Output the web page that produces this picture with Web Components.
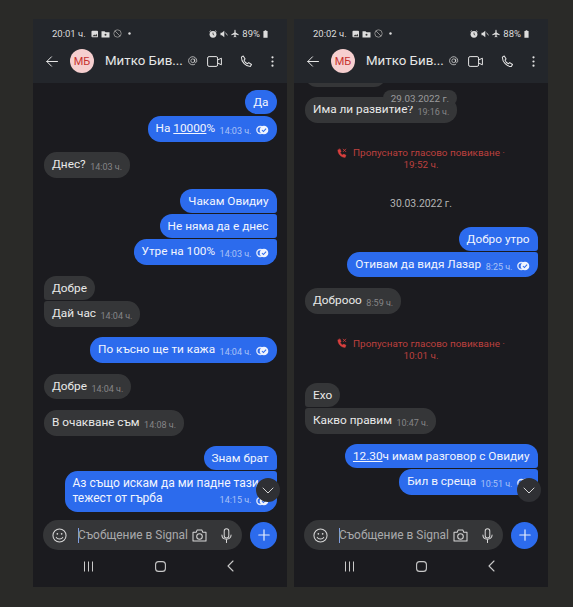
<!DOCTYPE html>
<html><head><meta charset="utf-8">
<style>
html,body{margin:0;padding:0;background:#2a2a28;}
body{width:573px;height:607px;overflow:hidden;font-family:Roboto,"Liberation Sans",sans-serif;}
.stage{display:flex;gap:7px;padding:19px 0 0 33px;}
</style></head><body>
<div class="stage">
<x-phone time="20:01 ч." batt="89%">
  <x-bubble out pos="single" top="7">Да</x-bubble>
  <x-bubble out pos="single" top="2" time="14:03 ч." tick>На <u>10000</u>%</x-bubble>
  <x-bubble top="10.500" time="14:03 ч.">Днес?</x-bubble>
  <x-bubble out pos="first" top="11">Чакам Овидиу</x-bubble>
  <x-bubble out pos="mid" top="1">Не няма да е днес</x-bubble>
  <x-bubble out pos="last" top="1.500" time="14:03 ч." tick>Утре на 100%</x-bubble>
  <x-bubble pos="first" top="11.500">Добре</x-bubble>
  <x-bubble pos="last" top="1" time="14:04 ч.">Дай час</x-bubble>
  <x-bubble out top="10.500" time="14:04 ч." tick>По късно ще ти кажа</x-bubble>
  <x-bubble top="11" time="14:04 ч.">Добре</x-bubble>
  <x-bubble top="11" time="14:08 ч.">В очакване съм</x-bubble>
  <x-bubble out pos="first" top="10.500">Знам брат</x-bubble>
  <x-wrap-bubble top="1" time="14:15 ч."><span slot="a">Аз също искам да ми падне тази</span><span slot="b">тежест от гърба</span></x-wrap-bubble>
</x-phone>
<x-phone time="20:02 ч." batt="88%">
  <x-bubble top="-20" pad="4px 39px">&nbsp;</x-bubble>
  <x-bubble top="10" time="19:16 ч.">Има ли развитие?</x-bubble>
  <x-date-pill>29.03.2022 г.</x-date-pill>
  <x-missed top="24.500" time="19:52 ч."></x-missed>
  <x-date top="26">30.03.2022 г.</x-date>
  <x-bubble out pos="first" top="15.700">Добро утро</x-bubble>
  <x-bubble out pos="last" top="1.300" time="8:25 ч." tick>Отивам да видя Лазар</x-bubble>
  <x-bubble top="11" time="8:59 ч.">Доброоо</x-bubble>
  <x-missed top="24" time="10:01 ч."></x-missed>
  <x-bubble pos="first" top="21">Ехо</x-bubble>
  <x-bubble pos="last" top="1.500" time="10:47 ч.">Какво правим</x-bubble>
  <x-bubble out pos="first" top="10.500"><u>12.30</u>ч имам разговор с Овидиу</x-bubble>
  <x-bubble out pos="last" top="1" time="10:51 ч." tick>Бил в среща</x-bubble>
</x-phone>
</div>
<script>
const BLUE='#2c6bed';
const tickSvg=`<svg viewBox="0 0 13 10" width="12.500" height="10" style="display:block"><circle cx="4.500" cy="5" r="3.600" fill="none" stroke="#dfe8fd" stroke-width="1.500"/><circle cx="8.300" cy="5" r="4.500" fill="#f0f4fe"/><path d="M6.200 5l1.500 1.600L10.500 3.600" fill="none" stroke="${BLUE}" stroke-width="1.100"/></svg>`;

class XBubble extends HTMLElement{
  connectedCallback(){
    if(this.shadowRoot)return;
    const r=this.attachShadow({mode:'open'});
    const out=this.hasAttribute('out');
    const t=this.getAttribute('time');const tick=this.hasAttribute('tick');
    const pos=this.getAttribute('pos')||'single';
    const R=12.5,S=3;
    const tIn=pos==='mid'||pos==='last'?S:R, bIn=pos==='first'||pos==='mid'?S:R;
    const rad=out?`${R}px ${tIn}px ${bIn}px ${R}px`:`${tIn}px ${R}px ${R}px ${bIn}px`;
    const pad=this.getAttribute('pad')||(t?'4px 8px 5.500px':'4px 8px');
    r.innerHTML=`<style>
    :host{display:flex;justify-content:${out?'flex-end':'flex-start'};padding:0 10.500px 0 11px;margin-top:${this.getAttribute('top')||0}px;flex:none}
    .b{background:${out?BLUE:'#353638'};color:${out?'#f2f5fe':'#e9e9e9'};font-size:11.800px;line-height:16px;padding:${pad};border-radius:${rad};box-sizing:border-box;white-space:nowrap}
    .m{font-size:9px;line-height:1;vertical-align:-2px;color:${out?'#a9c2f7':'#858587'};margin-left:4.500px}
    .tk{display:inline-block;vertical-align:-3px;line-height:0;margin-left:4.500px}
    </style><div class="b"><slot></slot>${t?`<span class="m">${t}</span>`:''}${tick?`<span class="tk">${tickSvg}</span>`:''}</div>`;
  }
}
customElements.define('x-bubble',XBubble);

class XWrapBubble extends HTMLElement{
  connectedCallback(){
    if(this.shadowRoot)return;
    const r=this.attachShadow({mode:'open'});
    r.innerHTML=`<style>
    :host{display:flex;justify-content:flex-end;padding:0 10.500px 0 0;margin-top:${this.getAttribute('top')||0}px;flex:none}
    .b{background:${BLUE};color:#f2f5fe;font-size:12px;line-height:15px;padding:5px 8px 6px;border-radius:12.500px 3px 12.500px 12.500px;width:212px;box-sizing:border-box;white-space:nowrap}
    .f{display:flex;align-items:center}
    .sp{flex:1}
    .m{font-size:9px;line-height:1;color:#a9c2f7;margin-top:4px}
    .tk{margin:5px 0 0 4.500px;flex:none}
    </style><div class="b"><div><slot name="a"></slot></div><div class="f"><slot name="b"></slot><span class="sp"></span><span class="m">${this.getAttribute('time')}</span><span class="tk">${tickSvg}</span></div></div>`;
  }
}
customElements.define('x-wrap-bubble',XWrapBubble);

class XMissed extends HTMLElement{
  connectedCallback(){
    if(this.shadowRoot)return;
    const r=this.attachShadow({mode:'open'});
    r.innerHTML=`<style>
    :host{display:block;margin-top:${this.getAttribute('top')||0}px;text-align:center;color:#bd403e;font-size:9.900px;line-height:12px;flex:none}
    svg{vertical-align:-2px;margin-right:6px}
    </style><svg viewBox="0 0 12 12" width="10" height="10.500" fill="none" stroke="#d8403e" stroke-linecap="round"><path d="M1 2.200C1 7 4.800 11 9.800 11l1-2.700L8 7 6.900 8.100C5.300 7.300 4.500 6.300 3.900 5L5 3.900 3.700 1z" fill="#d8403e" stroke-width=".5"/><path d="M7.500 1l3 3M10.500 1l-3 3" stroke-width="1"/></svg>Пропуснато гласово повикване ·<br>${this.getAttribute('time')}`;
  }
}
customElements.define('x-missed',XMissed);

class XDate extends HTMLElement{
  connectedCallback(){
    if(this.shadowRoot)return;
    const r=this.attachShadow({mode:'open'});
    r.innerHTML=`<style>:host{display:block;margin-top:${this.getAttribute('top')||0}px;text-align:center;color:#b4b4b4;font-size:10.400px;line-height:14px;flex:none}</style><slot></slot>`;
  }
}
customElements.define('x-date',XDate);

class XDatePill extends HTMLElement{
  connectedCallback(){
    if(this.shadowRoot)return;
    const r=this.attachShadow({mode:'open'});
    r.innerHTML=`<style>:host{display:block;position:absolute;top:7px;left:89px;width:74px;height:16px;box-sizing:border-box;padding-top:2px;text-align:center;background:#353638;color:#9b9b9d;font-size:9.800px;line-height:13px;border-radius:8px;z-index:1}</style><slot></slot>`;
  }
}
customElements.define('x-date-pill',XDatePill);

class XHeader extends HTMLElement{
  connectedCallback(){
    if(this.shadowRoot)return;
    const r=this.attachShadow({mode:'open'});
    r.innerHTML=`<style>
    :host{display:block;background:#23262b;color:#e6e6e6;flex:none;height:64px;box-sizing:border-box;padding-bottom:9px}
    .s{display:flex;align-items:center;height:29px;padding:0 19px 0 19px;font-size:9.500px;color:#dcdcdc;gap:3px}
    .sp{flex:1}
    .h{display:flex;align-items:center;height:26px;padding:0 13.500px 0 12.500px}
    .av{width:24px;height:24px;border-radius:50%;background:#f6cfcf;color:#c8322e;font-size:11px;display:flex;align-items:center;justify-content:center;margin-left:12.500px;flex:none}
    .n{font-size:13.300px;margin-left:11px;white-space:nowrap;flex:none;line-height:20px}
    svg{flex:none;display:block}
    </style>
    <div class="s"><span style="margin-right:2px">${this.getAttribute('time')}</span>
      <svg viewBox="0 0 8 8" width="7.500" height="8"><rect x=".5" y=".5" width="7" height="7" rx="1" fill="#ddd"/><path d="M1.500 6.500l2-2 1 1 1.200-1.800L6.800 6.500z" fill="#333"/></svg>
      <svg viewBox="0 0 9 8" width="9" height="8"><path d="M.5 1.200h3l1 1h4V7.500h-8z" fill="#ddd"/><circle cx="4.500" cy="4.800" r="1" fill="#333"/></svg>
      <svg viewBox="0 0 9 9" width="9" height="9" fill="none" stroke="#888"><circle cx="4.500" cy="4.500" r="3.700"/><path d="M2 2l5 5"/></svg>
      <svg viewBox="0 0 9 9" width="9" height="9"><circle cx="4.500" cy="4.500" r="1.200" fill="#ddd"/></svg>
      <span class="sp"></span>
      <svg viewBox="0 0 8 8" width="8" height="8"><circle cx="4" cy="4.300" r="3.400" fill="#ddd"/><path d="M4 2.600v1.800l1.200.7" stroke="#333" fill="none" stroke-width=".8"/><path d="M.4 1.800L1.800.5M7.600 1.800L6.200.5" stroke="#ddd" stroke-width=".8"/></svg>
      <svg viewBox="0 0 8 8" width="8" height="8"><path d="M.5 2.800h1.400L4.300.8v6.400L1.900 5.200H.5z" fill="#ddd"/><path d="M5.500 2.600l2 2.800" stroke="#ddd" stroke-width=".8"/></svg>
      <svg viewBox="0 0 9 9" width="8" height="9"><path d="M4.500 .3c.5 0 .7.700.7 1.400v1.800L8.700 5.700v.9L5.200 5.500v2l1 .7v.6l-1.700-.4-1.700.4v-.6l1-.7v-2L.3 6.600v-.9l3.500-2.200V1.700c0-.7.200-1.400.7-1.400z" fill="#ddd"/></svg>
      <span>${this.getAttribute('batt')}</span>
      <svg viewBox="0 0 6 9" width="5" height="8"><path d="M2 0h2v1h1.500v8h-5V1H2z" fill="#ddd"/></svg>
    </div>
    <div class="h">
      <svg viewBox="0 0 12 11" width="12" height="11" fill="none" stroke="#e6e6e6" stroke-width="1" stroke-linecap="round" stroke-linejoin="round"><path d="M11.500 5.500H.8M5.500 .8L.8 5.500l4.700 4.700"/></svg>
      <div class="av">МБ</div>
      <div class="n">Митко Бив...</div>
      <svg viewBox="0 0 10 10" width="9.500" height="9.500" style="margin-left:5.500px" fill="none" stroke="#d8d8d8" stroke-width=".8" stroke-linecap="round"><path d="M7 8.800A4.300 4.300 0 1 1 9.200 5c0 1.300-.6 2-1.300 2S7 6.300 7 5.500V3.300"/><circle cx="5" cy="5" r="2"/></svg>
      <svg viewBox="0 0 15 11" width="15" height="11" style="margin-left:9.500px" fill="none" stroke="#e6e6e6" stroke-width="1" stroke-linejoin="round"><rect x=".6" y=".6" width="10" height="9.800" rx="1.500"/><path d="M10.600 4L14.400 2.200v6.600L10.600 7"/></svg>
      <svg viewBox="0 0 14 14" width="13" height="13" style="margin-left:18px" fill="none" stroke="#e6e6e6" stroke-width="1.100" stroke-linejoin="round"><path d="M1.500 2.300L3.500 1l2 3.300-1.200 1.200c.6 1.700 2 3.200 3.800 3.900l1.300-1.200 3 2-1.300 2.300C6.500 12.500 1.300 7.500 1.500 2.300z"/></svg>
      <span class="sp" style="flex:1"></span>
      <svg viewBox="0 0 3 11" width="3" height="11"><circle cx="1.500" cy="1.300" r="1.100" fill="#e6e6e6"/><circle cx="1.500" cy="5.500" r="1.100" fill="#e6e6e6"/><circle cx="1.500" cy="9.700" r="1.100" fill="#e6e6e6"/></svg>
    </div>`;
  }
}
customElements.define('x-header',XHeader);

class XComposer extends HTMLElement{
  connectedCallback(){
    if(this.shadowRoot)return;
    const r=this.attachShadow({mode:'open'});
    r.innerHTML=`<style>
    :host{display:flex;align-items:center;flex:none;height:30px;padding:0 10px;gap:8px;margin-top:5px}
    .f{flex:1;height:30px;background:#353638;border-radius:15px;display:flex;align-items:center;color:#a9a9ab;padding:0 10px 0 9px;font-size:11.900px;box-sizing:border-box}
    .c{width:1px;height:15px;background:#7f9ee0;margin:0 0 0 11px;flex:none}
    .t{margin-left:-1px;white-space:nowrap;flex:1}
    .p{width:27px;height:27px;border-radius:50%;background:${BLUE};display:flex;align-items:center;justify-content:center;flex:none}
    svg{display:block;flex:none}
    </style>
    <div class="f">
      <svg viewBox="0 0 16 16" width="15" height="15" fill="none" stroke="#d8d8d8" stroke-width="1.100" stroke-linecap="round"><circle cx="8" cy="8" r="7"/><circle cx="5.700" cy="6.200" r=".9" fill="#d8d8d8" stroke="none"/><circle cx="10.300" cy="6.200" r=".9" fill="#d8d8d8" stroke="none"/><path d="M4.500 10c1 2.400 6 2.400 7 0"/></svg>
      <span class="c"></span><span class="t">Съобщение в Signal</span>
      <svg viewBox="0 0 16 14" width="15" height="13" fill="none" stroke="#d8d8d8" stroke-width="1.100" stroke-linejoin="round"><path d="M1 3.500h3.500L5.500 1h5l1 2.500H15V13H1z"/><circle cx="8" cy="8" r="3"/></svg>
      <svg viewBox="0 0 12 16" width="11" height="15" style="margin-left:14px" fill="none" stroke="#d8d8d8" stroke-width="1.100" stroke-linecap="round"><rect x="3.500" y=".7" width="5" height="10" rx="2.500"/><path d="M1 7.500c0 6 10 6 10 0M6 13v2.500"/></svg>
    </div>
    <div class="p"><svg viewBox="0 0 12 12" width="12" height="12" stroke="#e8eefc" stroke-width="1.200" stroke-linecap="round"><path d="M6 .8v10.400M.8 6h10.400"/></svg></div>`;
  }
}
customElements.define('x-composer',XComposer);

class XNav extends HTMLElement{
  connectedCallback(){
    if(this.shadowRoot)return;
    const r=this.attachShadow({mode:'open'});
    r.innerHTML=`<style>
    :host{display:flex;flex:none;height:32px;align-items:center;justify-content:space-between;padding:0 53px 0 50px}
    svg{display:block}
    </style>
    <svg viewBox="0 0 11 11" width="11" height="11" stroke="#c9c9c9" stroke-width="1"><path d="M1.500 .5v10M5.500 .5v10M9.500 .5v10"/></svg>
    <svg viewBox="0 0 11 11" width="11" height="11" fill="none" stroke="#c9c9c9" stroke-width="1.100"><rect x=".6" y=".6" width="9.800" height="9.800" rx="3"/></svg>
    <svg viewBox="0 0 7 12" width="7" height="12" fill="none" stroke="#c9c9c9" stroke-width="1.100" stroke-linecap="round" stroke-linejoin="round"><path d="M6 1L1 6l5 5"/></svg>`;
  }
}
customElements.define('x-nav',XNav);

class XPhone extends HTMLElement{
  connectedCallback(){
    if(this.shadowRoot)return;
    const r=this.attachShadow({mode:'open'});
    r.innerHTML=`<style>
    :host{display:flex;flex-direction:column;width:254px;height:568px;background:#1b1b1f;flex:none;overflow:hidden}
    .msgs{height:432px;flex:none;position:relative;display:flex;flex-direction:column;overflow:hidden}
    .down{position:absolute;right:7px;bottom:13px;width:24px;height:24px;border-radius:50%;background:#2f3034;display:flex;align-items:center;justify-content:center;z-index:2}
    </style>
    <x-header time="${this.getAttribute('time')}" batt="${this.getAttribute('batt')}"></x-header>
    <div class="msgs"><slot></slot><div class="down"><svg viewBox="0 0 12 7" width="12" height="7" fill="none" stroke="#d5d5d5" stroke-width="1" stroke-linecap="round" stroke-linejoin="round"><path d="M1 1l5 5 5-5"/></svg></div></div>
    <x-composer></x-composer><x-nav></x-nav>`;
  }
}
customElements.define('x-phone',XPhone);
</script>
</body></html>
